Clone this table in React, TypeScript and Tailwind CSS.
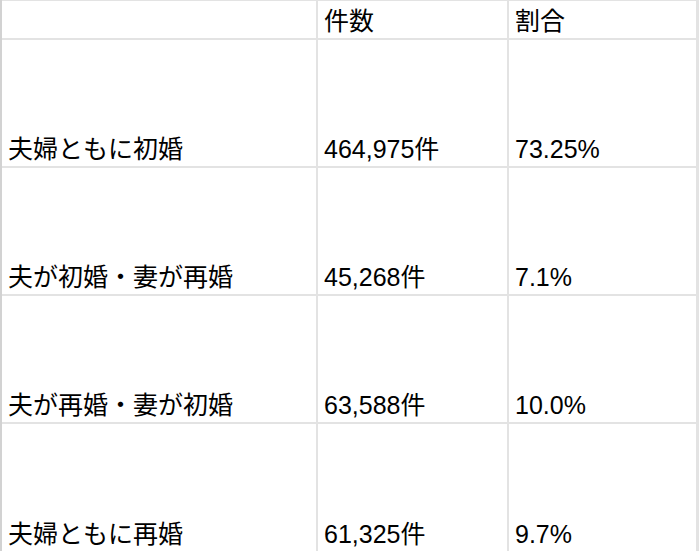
import { Fragment } from 'react'

const rows = [
  { label: '夫婦ともに初婚', count: '464,975件', ratio: '73.25%' },
  { label: '夫が初婚・妻が再婚', count: '45,268件', ratio: '7.1%' },
  { label: '夫が再婚・妻が初婚', count: '63,588件', ratio: '10.0%' },
  { label: '夫婦ともに再婚', count: '61,325件', ratio: '9.7%' },
]

function Cell({ children }: { children?: React.ReactNode }) {
  return (
    <div className="bg-white flex items-end pl-[6px] pb-[2px] text-[25px] leading-[30px] text-black whitespace-nowrap overflow-hidden">
      {children}
    </div>
  )
}

export default function App() {
  return (
    <div
      className="w-[700px] h-[551px] bg-white overflow-hidden"
      style={{ fontFamily: '"Liberation Sans", "Noto Sans CJK JP", sans-serif' }}
    >
      <div className="w-[699px] h-[551px] bg-[#e3e3e3] border-l-2 border-[#d2d2d2] pt-px pr-[3px] grid grid-cols-[314px_189px_187px] grid-rows-[37px_126px_126px_126px_127px] gap-[2px]">
        <Cell />
        <Cell>件数</Cell>
        <Cell>割合</Cell>
        {rows.map((r) => (
          <Fragment key={r.label}>
            <Cell>{r.label}</Cell>
            <Cell>{r.count}</Cell>
            <Cell>{r.ratio}</Cell>
          </Fragment>
        ))}
      </div>
    </div>
  )
}
